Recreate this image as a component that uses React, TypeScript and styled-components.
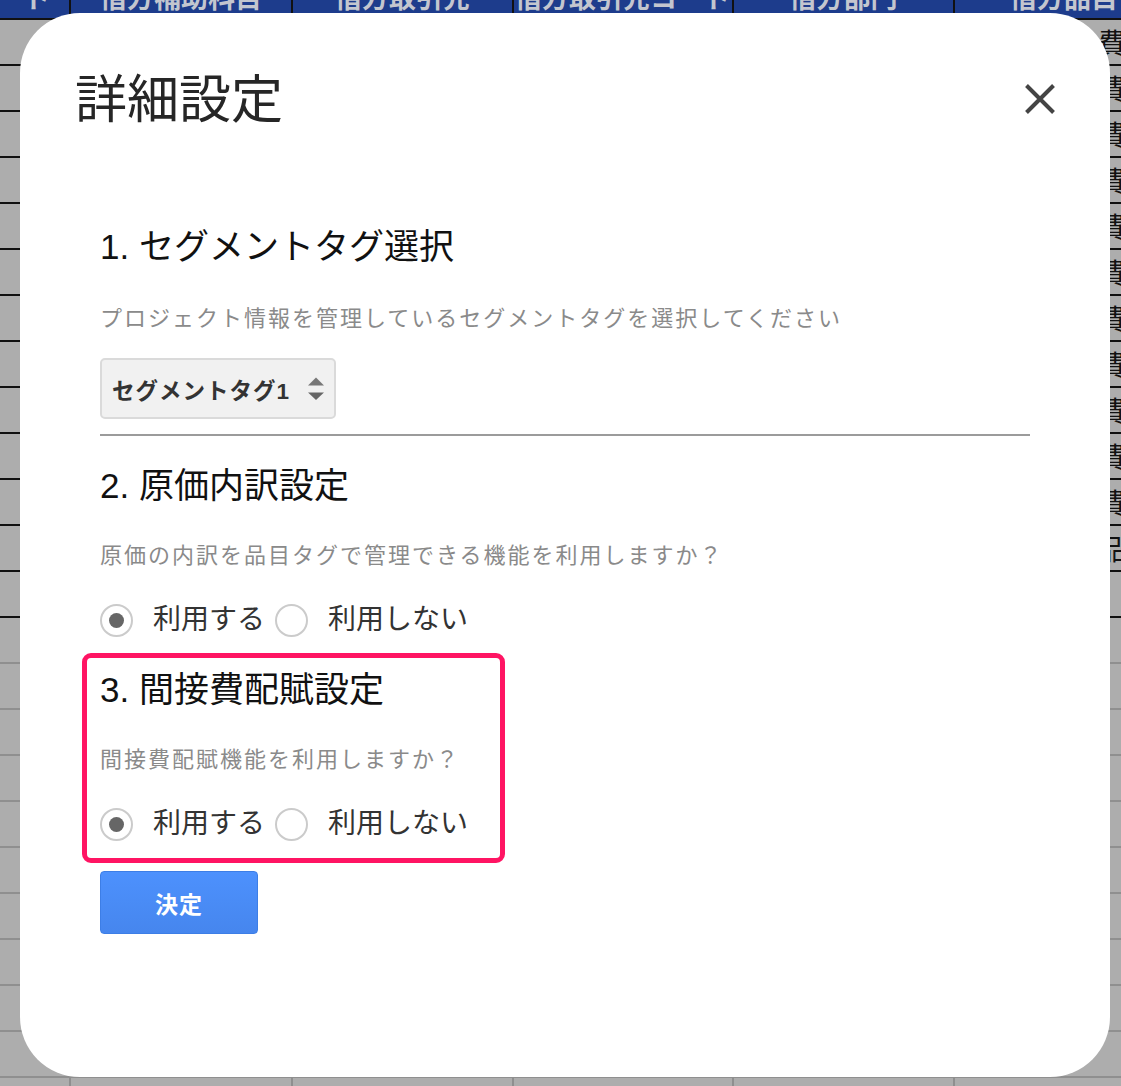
import React from 'react';
import styled, { createGlobalStyle } from 'styled-components';

const GlobalStyle = createGlobalStyle`
  html, body {
    margin: 0;
    padding: 0;
  }
  body {
    background: #adadad;
    font-family: 'Liberation Sans', 'Noto Sans CJK JP', sans-serif;
    overflow: hidden;
  }
`;

const COLUMNS = '69px 222px 221px 220px 221px 220px';

const Page = styled.div`
  position: relative;
  width: 1121px;
  height: 1086px;
  overflow: hidden;
`;

const SheetHeader = styled.div`
  display: grid;
  grid-template-columns: ${COLUMNS};
  height: 20px;
  background: #1d3c8c;
  border-bottom: 2px solid #111;
  box-sizing: border-box;
`;

const HeaderCell = styled.div<{ $first?: boolean }>`
  display: flex;
  align-items: flex-end;
  justify-content: ${(p) => (p.$first ? 'flex-end' : 'center')};
  padding: 0 ${(p) => (p.$first ? '18px' : '0')} 8px 0;
  border-left: ${(p) => (p.$first ? 'none' : '2px solid #111')};
  overflow: hidden;
  font-family: 'Noto Sans CJK JP', sans-serif;
  font-size: 27px;
  line-height: 27px;
  font-weight: 700;
  color: #c3c6cf;
  white-space: nowrap;
`;

const BodyRow = styled.div<{ $filled: boolean }>`
  display: grid;
  grid-template-columns: ${COLUMNS};
  height: 46px;
  box-sizing: border-box;
  border-bottom: 2px solid ${(p) => (p.$filled ? '#111' : '#8f8f8f')};
`;

const BodyCell = styled.div<{ $first?: boolean }>`
  display: flex;
  align-items: center;
  border-left: ${(p) => (p.$first ? 'none' : '2px solid #8f8f8f')};
`;

const ItemCell = styled(BodyCell)`
  padding-left: 143px;
  font-family: 'Noto Sans CJK JP', sans-serif;
  font-size: 28px;
  color: #111;
  white-space: nowrap;
  overflow: hidden;
`;

const Modal = styled.div`
  position: absolute;
  left: 20px;
  top: 13px;
  width: 1090px;
  height: 1064px;
  box-sizing: border-box;
  padding: 56px 55px 0 55px;
  background: #fff;
  border-radius: 60px;
`;

const ModalHeader = styled.div`
  display: flex;
  justify-content: space-between;
  align-items: center;
  height: 62px;
`;

const Title = styled.h1`
  margin: 0;
  font-size: 52px;
  line-height: 62px;
  font-weight: 400;
  color: #262626;
`;

const CloseButton = styled.button`
  display: flex;
  width: 30px;
  height: 30px;
  padding: 0;
  margin-top: -2px;
  border: none;
  background: none;
  cursor: pointer;
`;

const ModalBody = styled.div`
  margin-top: 94px;
  padding: 0 25px 0 25px;
`;

const SectionTitle = styled.h2<{ $mt?: number }>`
  margin: ${(p) => p.$mt ?? 0}px 0 0;
  font-size: 35px;
  line-height: 44px;
  font-weight: 400;
  color: #111;
`;

const Description = styled.p<{ $mt: number }>`
  margin: ${(p) => p.$mt}px 0 0;
  font-size: 22px;
  line-height: 30px;
  letter-spacing: 2px;
  color: #8a8a8a;
  white-space: nowrap;
`;

const Select = styled.div`
  display: flex;
  align-items: center;
  gap: 18px;
  width: 236px;
  height: 61px;
  margin-top: 24px;
  padding-left: 10px;
  box-sizing: border-box;
  background: #f1f1f1;
  border: 2px solid #dadada;
  border-radius: 5px;
  font-size: 22.5px;
  font-weight: 700;
  letter-spacing: 1px;
  color: #333;
`;

const Divider = styled.hr`
  margin: 15px 0 0;
  border: none;
  border-top: 2px solid #9b9b9b;
  height: 0;
`;

const RadioGroup = styled.div<{ $mt: number }>`
  display: flex;
  align-items: center;
  height: 34px;
  margin-top: ${(p) => p.$mt}px;
`;

const RadioOption = styled.label`
  display: flex;
  align-items: center;
  margin-right: 10px;
`;

const RadioCircle = styled.span<{ $checked: boolean }>`
  display: flex;
  align-items: center;
  justify-content: center;
  width: 33px;
  height: 33px;
  box-sizing: border-box;
  border: 2px solid #cbcbcb;
  border-radius: 50%;
  background: #fff;
  &::after {
    content: '';
    width: 15px;
    height: 15px;
    border-radius: 50%;
    background: ${(p) => (p.$checked ? '#666' : 'transparent')};
  }
`;

const RadioLabel = styled.span`
  margin-left: 20px;
  font-size: 28px;
  line-height: 34px;
  color: #333;
`;

const Highlight = styled.div`
  width: 423px;
  margin: 16px 0 0 -18px;
  padding: 10px 0 17px 13px;
  box-sizing: border-box;
  border: 5px solid #ff1463;
  border-radius: 9px;
`;

const SubmitButton = styled.button`
  width: 158px;
  height: 63px;
  margin-top: 8px;
  padding: 0;
  border: 1px solid #3d7ee6;
  border-radius: 4px;
  background: linear-gradient(#4d91fd, #4686ee);
  font-family: 'Noto Sans CJK JP', sans-serif;
  font-size: 23px;
  font-weight: 700;
  letter-spacing: 1px;
  color: #fff;
  cursor: pointer;
`;

const headers = ['コード', '借方補助科目', '借方取引先', '借方取引先コード', '借方部門', '借方品目'];

const rows = Array.from({ length: 24 }, (_, i) => ({
  filled: i < 13,
  item: i < 11 ? '費用' : i === 11 ? '品目' : '',
}));

const SortArrows = () => (
  <svg width="16" height="24" viewBox="0 0 16 24">
    <polygon points="0,8.5 8,0.5 16,8.5" fill="#777" />
    <polygon points="0,15.5 16,15.5 8,23" fill="#666" />
  </svg>
);

const CloseIcon = () => (
  <svg width="30" height="30" viewBox="0 0 30 30">
    <path d="M1.5 1.5 L28.5 28.5 M28.5 1.5 L1.5 28.5" stroke="#444" strokeWidth="4" fill="none" />
  </svg>
);

const UsageRadios = ({ mt }: { mt: number }) => (
  <RadioGroup $mt={mt}>
    <RadioOption>
      <RadioCircle $checked />
      <RadioLabel>利用する</RadioLabel>
    </RadioOption>
    <RadioOption>
      <RadioCircle $checked={false} />
      <RadioLabel>利用しない</RadioLabel>
    </RadioOption>
  </RadioGroup>
);

const App = () => {
  return (
    <>
      <GlobalStyle />
      <Page>
        <SheetHeader>
          {headers.map((h, i) => (
            <HeaderCell key={h} $first={i === 0}>
              {h}
            </HeaderCell>
          ))}
        </SheetHeader>
        {rows.map((row, i) => (
          <BodyRow key={i} $filled={row.filled}>
            <BodyCell $first />
            <BodyCell />
            <BodyCell />
            <BodyCell />
            <BodyCell />
            <ItemCell>{row.item}</ItemCell>
          </BodyRow>
        ))}

        <Modal>
          <ModalHeader>
            <Title>詳細設定</Title>
            <CloseButton aria-label="閉じる">
              <CloseIcon />
            </CloseButton>
          </ModalHeader>

          <ModalBody>
            <SectionTitle>1. セグメントタグ選択</SectionTitle>
            <Description $mt={35}>
              プロジェクト情報を管理しているセグメントタグを選択してください
            </Description>
            <Select>
              <span>セグメントタグ1</span>
              <SortArrows />
            </Select>
            <Divider />

            <SectionTitle $mt={28}>2. 原価内訳設定</SectionTitle>
            <Description $mt={33}>原価の内訳を品目タグで管理できる機能を利用しますか？</Description>
            <UsageRadios mt={32} />

            <Highlight>
              <SectionTitle>3. 間接費配賦設定</SectionTitle>
              <Description $mt={33}>間接費配賦機能を利用しますか？</Description>
              <UsageRadios mt={32} />
            </Highlight>

            <SubmitButton>決定</SubmitButton>
          </ModalBody>
        </Modal>
      </Page>
    </>
  );
};

export default App;
